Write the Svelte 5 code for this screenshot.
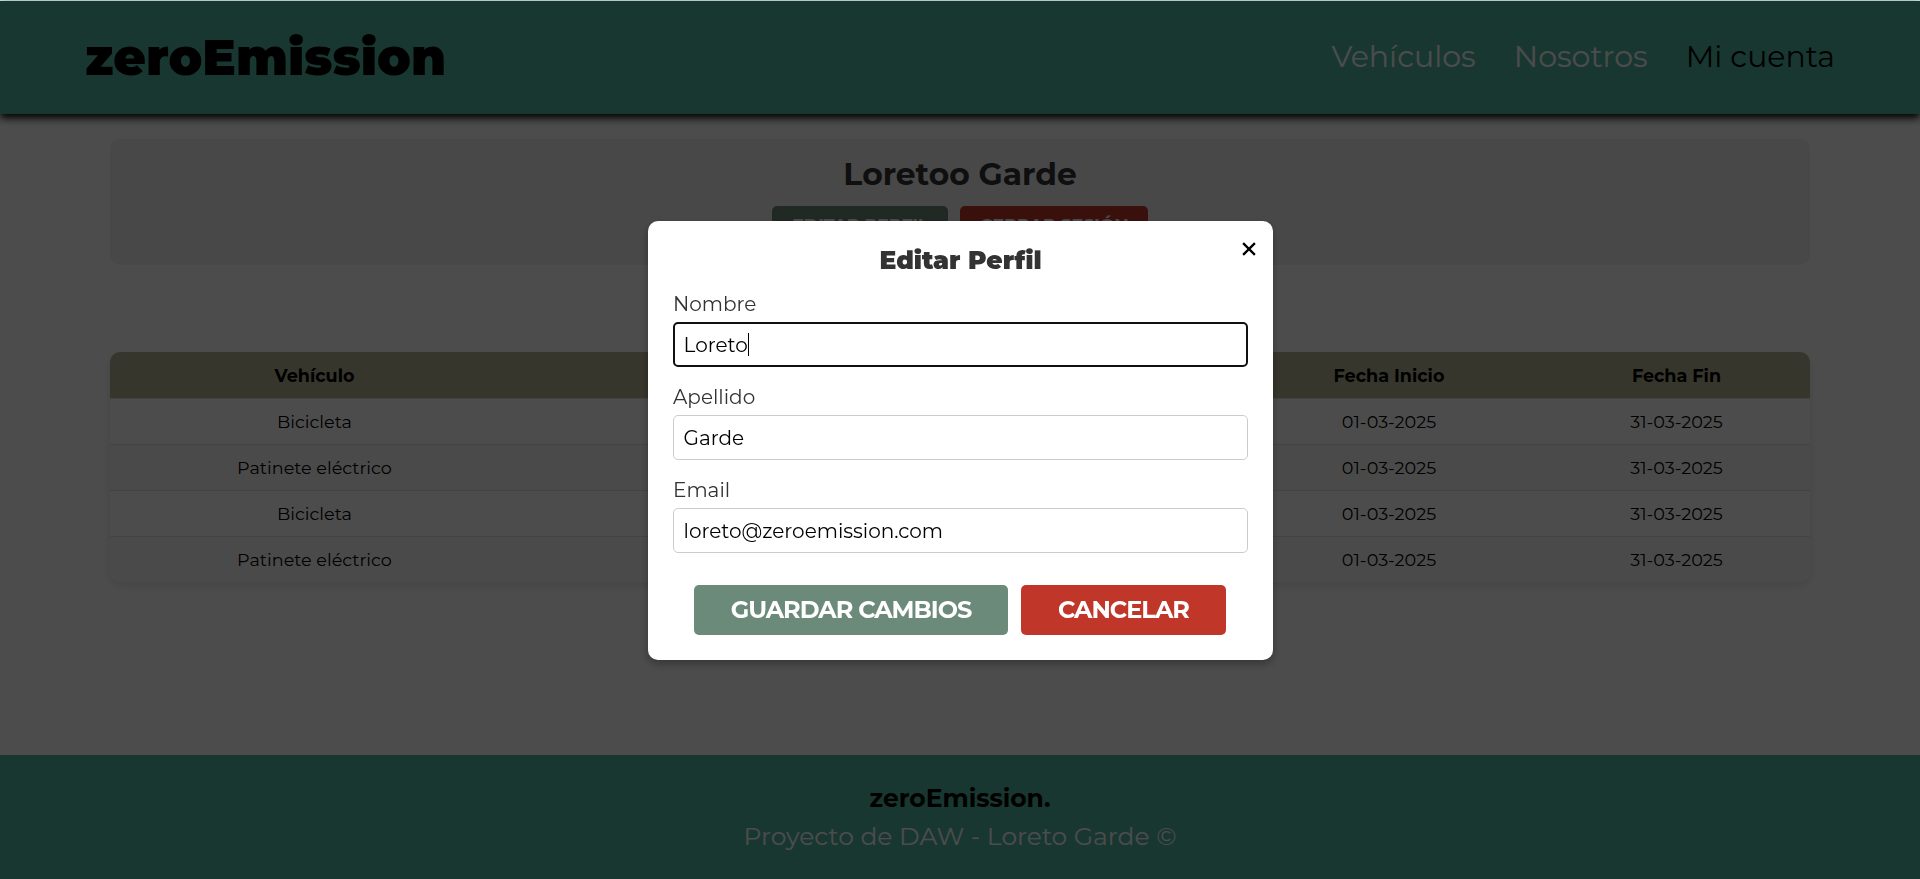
<script>
  const rows = ['Bicicleta', 'Patinete eléctrico', 'Bicicleta', 'Patinete eléctrico'];
  const fields = [
    { label: 'Nombre', value: 'Loreto', focused: true },
    { label: 'Apellido', value: 'Garde', focused: false },
    { label: 'Email', value: 'loreto@zeroemission.com', focused: false }
  ];
</script>

<div class="page">
  <header>
    <div class="logo">zeroEmission</div>
    <nav>
      <a href="#vehiculos">Vehículos</a>
      <a href="#nosotros">Nosotros</a>
      <a href="#cuenta" class="active">Mi cuenta</a>
    </nav>
  </header>

  <main>
    <section class="profile">
      <h1>Loretoo Garde</h1>
      <div class="actions">
        <button class="edit">EDITAR PERFIL</button>
        <button class="logout">CERRAR SESIÓN</button>
      </div>
    </section>

    <div class="table">
      <div class="row head">
        <span>Vehículo</span><span></span><span>Fecha Inicio</span><span>Fecha Fin</span>
      </div>
      {#each rows as name}
        <div class="row">
          <span>{name}</span><span></span><span>01-03-2025</span><span>31-03-2025</span>
        </div>
      {/each}
    </div>
  </main>

  <footer>
    <strong>zeroEmission.</strong>
    <p>Proyecto de DAW - Loreto Garde ©</p>
  </footer>
</div>

<div class="overlay">
  <div class="modal" role="dialog" aria-modal="true">
    <button class="close" aria-label="Cerrar">
      <svg width="14" height="14" viewBox="0 0 14 14"><path d="M1.1 1.1 12.9 12.9M12.9 1.1 1.1 12.9" stroke="#000" stroke-width="2.3" fill="none" /></svg>
    </button>
    <h2>Editar Perfil</h2>
    {#each fields as f}
      <div class="field">
        <div class="label">{f.label}</div>
        <div class="input" class:focused={f.focused}>
          <span>{f.value}</span>{#if f.focused}<i class="caret"></i>{/if}
        </div>
      </div>
    {/each}
    <div class="buttons">
      <button class="save">GUARDAR CAMBIOS</button>
      <button class="cancel">CANCELAR</button>
    </div>
  </div>
</div>

<style>
  :global(body) {
    margin: 0;
    background: #fff;
    font-family: Montserrat, Inter, sans-serif;
    overflow: hidden;
  }
  .page {
    height: 879px;
    display: flex;
    flex-direction: column;
    box-sizing: border-box;
    border-top: 1px solid #d3eae4;
  }
  header {
    height: 113px;
    flex: none;
    box-sizing: border-box;
    padding: 0 85px;
    display: flex;
    align-items: center;
    justify-content: space-between;
    background: #52baa2;
    box-shadow: 0 4px 8px #000;
  }
  .logo {
    font-size: 50px;
    font-weight: 900;
    line-height: 60px;
  }
  nav {
    display: flex;
    gap: 38px;
    padding-bottom: 2px;
  }
  nav a {
    font-size: 30px;
    font-weight: 380;
    color: #fff;
    text-decoration: none;
    line-height: 40px;
  }
  nav a.active {
    color: #000;
  }
  main {
    flex: 1;
    padding: 25px 110px 0;
  }
  .profile {
    height: 126px;
    box-sizing: border-box;
    padding-top: 15px;
    border-radius: 10px;
    background: #f0f0f0;
    text-align: center;
  }
  h1 {
    margin: 0;
    font-size: 31.3px;
    font-weight: 700;
    line-height: 40px;
    color: #333;
  }
  .actions {
    display: flex;
    justify-content: center;
    gap: 12px;
    margin-top: 12px;
  }
  button {
    border: 0;
    padding: 0;
    border-radius: 5px;
    font-family: inherit;
    font-weight: 700;
    color: #fff;
  }
  .actions button {
    height: 39px;
    font-size: 18px;
    letter-spacing: -0.45px;
  }
  .edit {
    width: 176px;
  }
  .logout {
    width: 188px;
  }
  .edit,
  .save {
    background: #6b8a7a;
  }
  .logout,
  .cancel {
    background: #c0372a;
  }
  .table {
    margin-top: 87px;
    border-radius: 10px;
    overflow: hidden;
    box-shadow: 0 4px 8px rgba(0, 0, 0, 0.1);
  }
  .row {
    height: 46px;
    box-sizing: border-box;
    border-top: 1px solid #e0e0e0;
    display: grid;
    grid-template-columns: 409px 716px 308px 267px;
    align-items: center;
    text-align: center;
    font-size: 17.6px;
    line-height: 22px;
    background: #fff;
  }
  .row:nth-child(odd) {
    background: #f9f9f9;
  }
  .row.head {
    border-top: 0;
    padding-top: 1px;
    background: #b8b593;
    font-weight: 700;
  }
  footer {
    height: 124px;
    flex: none;
    box-sizing: border-box;
    padding-top: 24px;
    background: #52baa2;
    text-align: center;
    font-size: 25px;
    line-height: 38px;
  }
  footer strong {
    display: block;
  }
  footer p {
    margin: 0;
    color: #fff;
  }
  .overlay {
    position: fixed;
    inset: 1px 0 0 0;
    background: rgba(0, 0, 0, 0.7);
    display: flex;
    align-items: center;
    justify-content: center;
  }
  .modal {
    position: relative;
    top: 0.5px;
    width: 625px;
    height: 439px;
    box-sizing: border-box;
    padding: 25px;
    margin-left: 1px;
    border-radius: 10px;
    background: #fff;
    box-shadow: 0 4px 10px rgba(0, 0, 0, 0.3);
  }
  .close {
    position: absolute;
    right: 17px;
    top: 21px;
    width: 14px;
    height: 14px;
    background: none;
  }
  .close svg {
    display: block;
  }
  h2 {
    margin: 0 0 17px;
    font-size: 25px;
    font-weight: 900;
    line-height: 29px;
    text-align: center;
    color: #333;
  }
  .field {
    margin-bottom: 18px;
  }
  .label {
    font-size: 20px;
    font-weight: 370;
    line-height: 24px;
    color: #333;
    margin-bottom: 6px;
  }
  .input {
    height: 45px;
    box-sizing: border-box;
    border: 1px solid #ccc;
    border-radius: 5px;
    padding: 0 9.5px;
    display: flex;
    align-items: center;
    font-size: 20px;
    line-height: 24px;
    color: #000;
  }
  .input.focused {
    border: 2px solid #101010;
    padding: 0 8.5px;
  }
  .caret {
    width: 1px;
    height: 23px;
    background: #000;
  }
  .buttons {
    display: flex;
    justify-content: center;
    gap: 13px;
    margin-top: 32px;
    margin-left: -1px;
  }
  .buttons button {
    height: 50px;
    padding-bottom: 2px;
    font-size: 24px;
    letter-spacing: -1px;
  }
  .save {
    width: 314px;
  }
  .cancel {
    width: 205px;
  }
</style>
